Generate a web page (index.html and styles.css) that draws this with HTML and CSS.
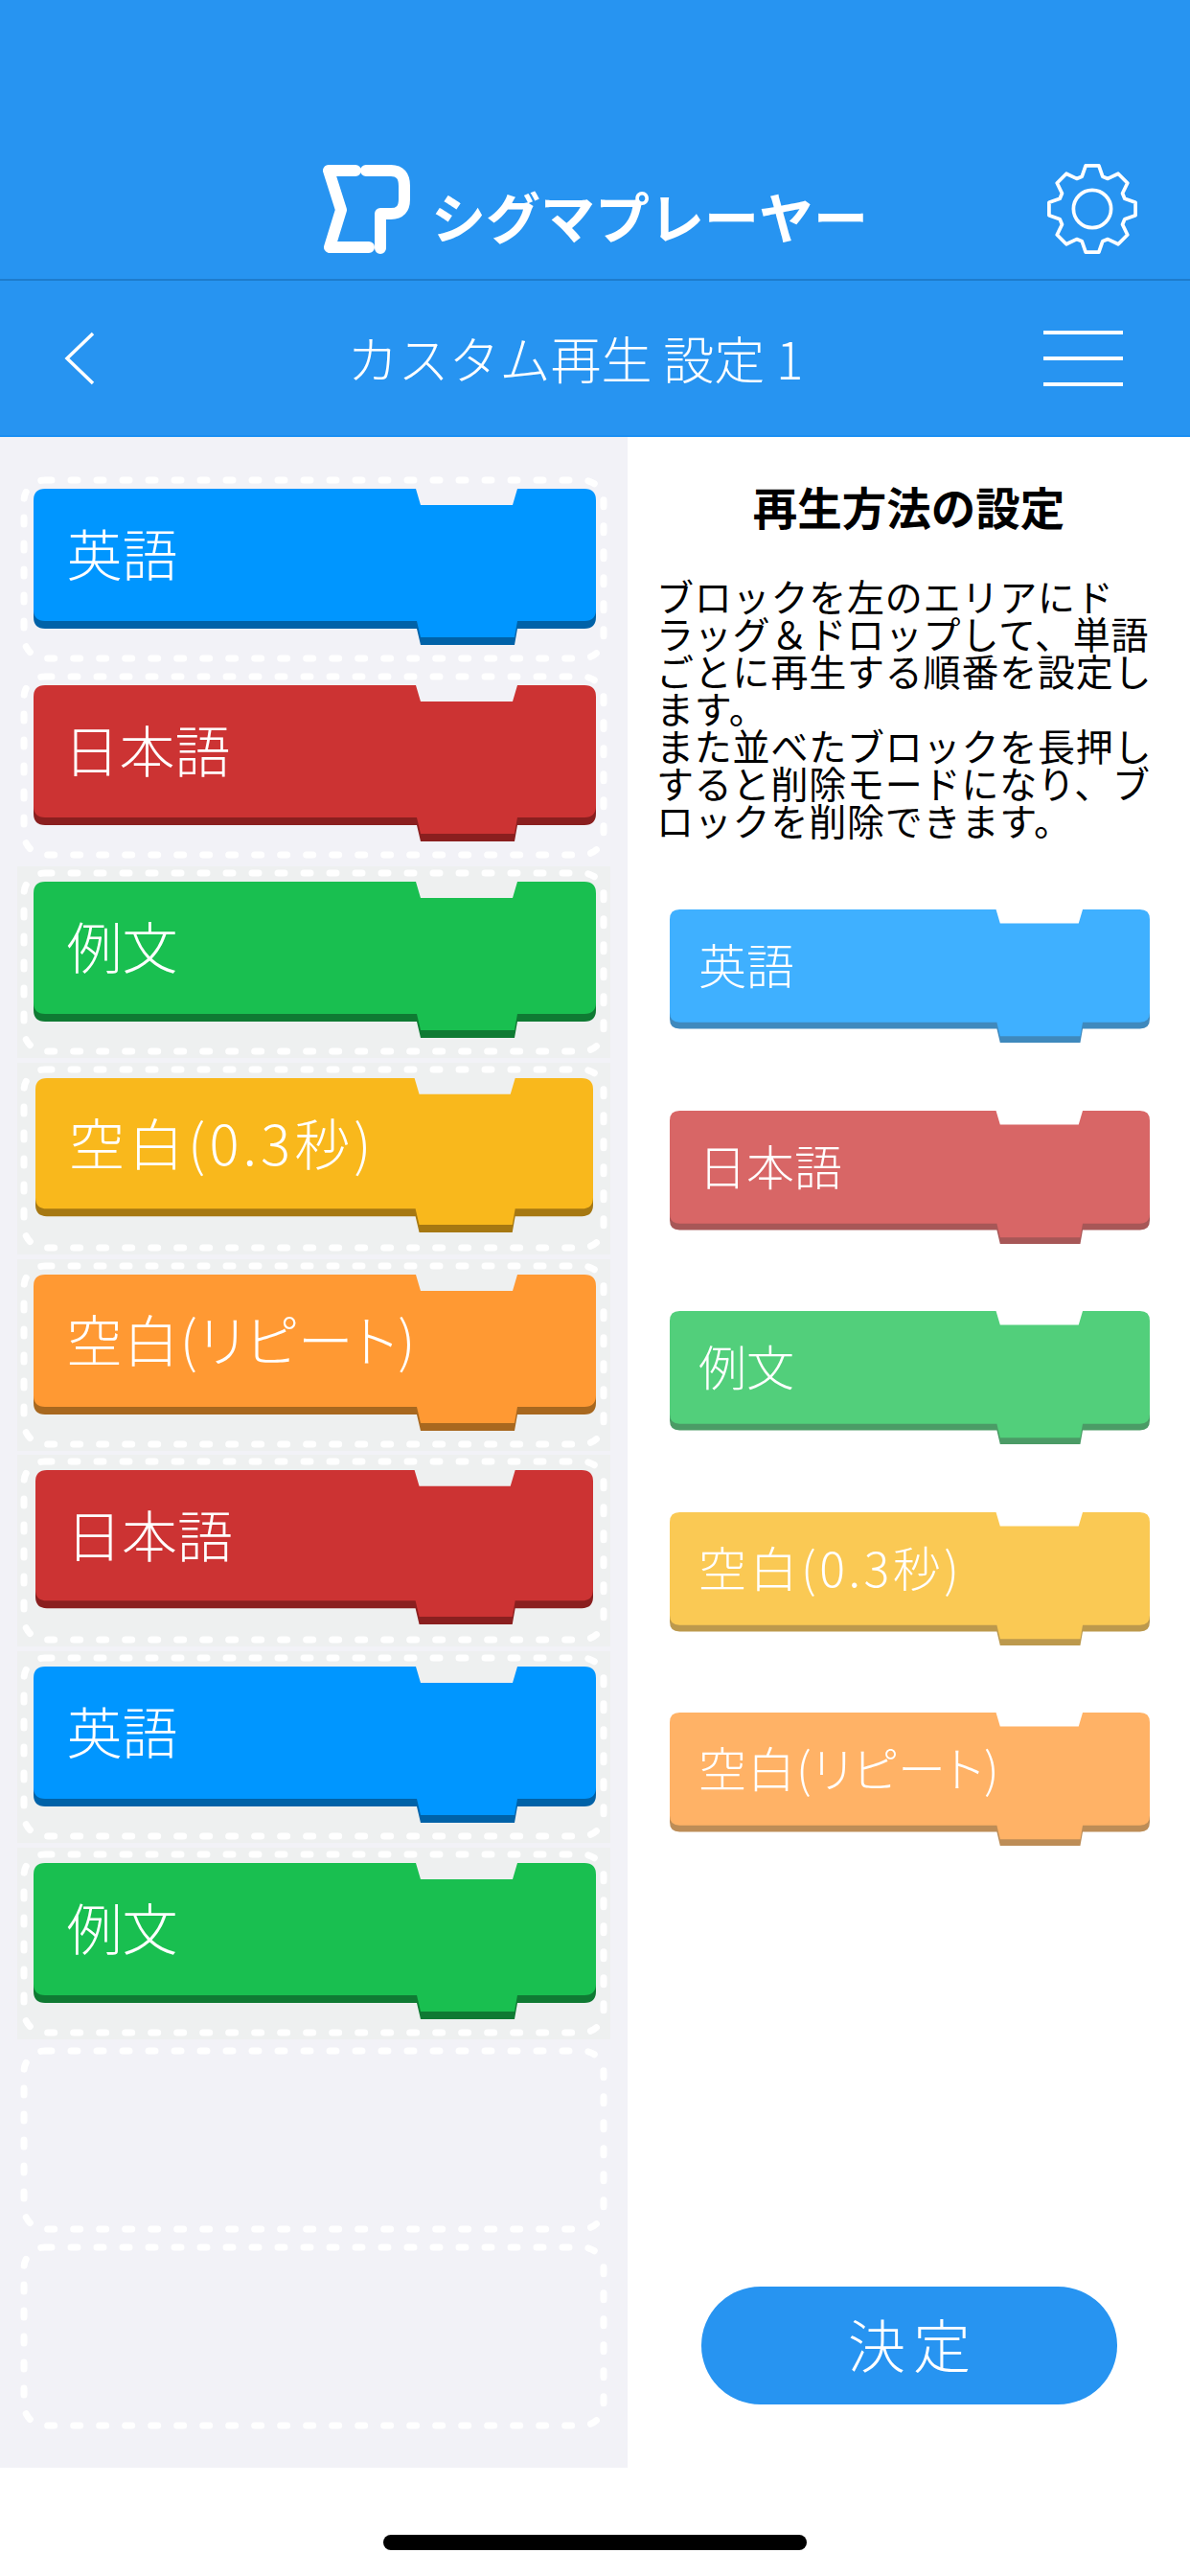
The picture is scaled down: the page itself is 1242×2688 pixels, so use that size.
FILE: index.html
```html
<!DOCTYPE html>
<html lang="ja">
<head>
    <meta charset="UTF-8">
    <meta name="viewport" content="width=device-width, initial-scale=1.0">
    <title>カスタム再生 設定1</title>
    <link rel="stylesheet" href="styles.css">
</head>
<body>
    <!-- shared shapes -->
    <svg class="defs" width="0" height="0">
        <defs>
            <g id="block-shape">
                <path class="block-dark" d="M0 100V134Q0 146 12 146H400L404 163H502L505 146H575Q587 146 587 134V100Z"/>
                <path class="block-face" d="M12 0H399L404 17H500L505 0H575Q587 0 587 12V126Q587 138 575 138H505L502 155H404L400 138H12Q0 138 0 126V12Q0 0 12 0Z"/>
            </g>
            <rect id="slot-outline" x="0" y="0" width="605" height="186" rx="22"/>
        </defs>
    </svg>

    <div class="page">
        <header class="topbar">
            <div></div>
            <div class="brand">
                <svg class="brand-mark" viewBox="0 0 92 96">
                    <path d="M7 7H35M7 7L20 48L8 87H49M46 7H72Q86 7 86 23V37Q86 52 72 52H61V88"/>
                </svg>
                <span class="brand-name">シグマプレーヤー</span>
            </div>
            <svg class="gear" viewBox="0 0 100 100">
                <path d="M39 15.5L43 4H57L61 15.5L66.6 17.8L77.6 12.5L87.5 22.4L82.2 33.4L84.5 39L96 43V57L84.5 61L82.2 66.6L87.5 77.6L77.6 87.5L66.6 82.2L61 84.5L57 96H43L39 84.5L33.4 82.2L22.4 87.5L12.5 77.6L17.8 66.6L15.5 61L4 57V43L15.5 39L17.8 33.4L12.5 22.4L22.4 12.5L33.4 17.8Z"/>
                <circle cx="50" cy="50" r="20"/>
            </svg>
        </header>

        <nav class="subbar">
            <svg class="back" viewBox="0 0 32 56">
                <path d="M30 2L3 28L30 54"/>
            </svg>
            <h1 class="subbar-title">カスタム再生 設定 1</h1>
            <div class="menu"><span></span><span></span><span></span></div>
        </nav>

        <main class="main">
            <section class="slots">
                <div class="slot">
                    <svg class="slot-dash"><use href="#slot-outline"/></svg>
                    <div class="block blue"><svg viewBox="0 0 587 163" preserveAspectRatio="none"><use href="#block-shape"/></svg><span class="block-label">英語</span></div>
                </div>
                <div class="slot">
                    <svg class="slot-dash"><use href="#slot-outline"/></svg>
                    <div class="block red"><svg viewBox="0 0 587 163" preserveAspectRatio="none"><use href="#block-shape"/></svg><span class="block-label label-jp">日本語</span></div>
                </div>
                <div class="slot placed">
                    <svg class="slot-dash"><use href="#slot-outline"/></svg>
                    <div class="block green"><svg viewBox="0 0 587 163" preserveAspectRatio="none"><use href="#block-shape"/></svg><span class="block-label">例文</span></div>
                </div>
                <div class="slot placed">
                    <svg class="slot-dash"><use href="#slot-outline"/></svg>
                    <div class="block yellow narrow"><svg viewBox="0 0 587 163" preserveAspectRatio="none"><use href="#block-shape"/></svg><span class="block-label label-time">空白(0.3秒)</span></div>
                </div>
                <div class="slot placed">
                    <svg class="slot-dash"><use href="#slot-outline"/></svg>
                    <div class="block orange"><svg viewBox="0 0 587 163" preserveAspectRatio="none"><use href="#block-shape"/></svg><span class="block-label label-repeat">空白(リピート)</span></div>
                </div>
                <div class="slot placed">
                    <svg class="slot-dash"><use href="#slot-outline"/></svg>
                    <div class="block red narrow"><svg viewBox="0 0 587 163" preserveAspectRatio="none"><use href="#block-shape"/></svg><span class="block-label label-jp">日本語</span></div>
                </div>
                <div class="slot placed">
                    <svg class="slot-dash"><use href="#slot-outline"/></svg>
                    <div class="block blue"><svg viewBox="0 0 587 163" preserveAspectRatio="none"><use href="#block-shape"/></svg><span class="block-label">英語</span></div>
                </div>
                <div class="slot placed">
                    <svg class="slot-dash"><use href="#slot-outline"/></svg>
                    <div class="block green"><svg viewBox="0 0 587 163" preserveAspectRatio="none"><use href="#block-shape"/></svg><span class="block-label">例文</span></div>
                </div>
                <div class="slot">
                    <svg class="slot-dash"><use href="#slot-outline"/></svg>
                </div>
                <div class="slot">
                    <svg class="slot-dash"><use href="#slot-outline"/></svg>
                </div>
            </section>

            <aside class="side">
                <h2 class="side-title">再生方法の設定</h2>
                <p class="side-text">ブロックを左のエリアにドラッグ＆ドロップして、単語ごとに再生する順番を設定します。
また並べたブロックを長押しすると削除モードになり、ブロックを削除できます。</p>
                <div class="palette">
                    <div class="block small blue"><svg viewBox="0 0 587 163" preserveAspectRatio="none"><use href="#block-shape"/></svg><span class="block-label">英語</span></div>
                    <div class="block small red"><svg viewBox="0 0 587 163" preserveAspectRatio="none"><use href="#block-shape"/></svg><span class="block-label">日本語</span></div>
                    <div class="block small green"><svg viewBox="0 0 587 163" preserveAspectRatio="none"><use href="#block-shape"/></svg><span class="block-label">例文</span></div>
                    <div class="block small yellow"><svg viewBox="0 0 587 163" preserveAspectRatio="none"><use href="#block-shape"/></svg><span class="block-label label-time">空白(0.3秒)</span></div>
                    <div class="block small orange"><svg viewBox="0 0 587 163" preserveAspectRatio="none"><use href="#block-shape"/></svg><span class="block-label label-repeat">空白(リピート)</span></div>
                </div>
                <button class="confirm">決定</button>
            </aside>
        </main>

        <div class="home-area"><div class="home-bar"></div></div>
    </div>
</body>
</html>
```

FILE: styles.css
```css
* {
    box-sizing: border-box;
}
body {
    margin: 0;
    background-color: #fff;
    color: #000;
    font-family: "Noto Sans CJK JP", "Noto Sans", sans-serif;
}
.defs {
    display: block;
    height: 0;
}
.page {
    display: flex;
    flex-direction: column;
    width: 1242px;
    height: 2688px;
    overflow: hidden;
}

/* header */
.topbar {
    display: grid;
    grid-template-columns: 1fr auto 1fr;
    align-items: end;
    height: 293px;
    padding: 0 53px 24px;
    background-color: #2794f1;
    border-bottom: 2px solid #1e7ccd;
}
.brand {
    display: flex;
    align-items: center;
    gap: 22px;
    color: #fff;
}
.brand-mark {
    width: 92px;
    height: 96px;
    fill: none;
    stroke: #fff;
    stroke-width: 12;
    stroke-linecap: round;
    stroke-linejoin: round;
}
.brand-name {
    padding-top: 10px;
    font-size: 57px;
    font-weight: 700;
    line-height: 1;
}
.gear {
    justify-self: end;
    width: 98px;
    height: 98px;
    fill: none;
    stroke: #fff;
    stroke-width: 3.8;
    stroke-linejoin: round;
}
.subbar {
    display: grid;
    grid-template-columns: 1fr auto 1fr;
    align-items: center;
    height: 163px;
    padding: 0 70px 0 67px;
    background-color: #2794f1;
    border-bottom: 2px solid #1b8ff2;
}
.back {
    width: 32px;
    height: 56px;
    fill: none;
    stroke: #fff;
    stroke-width: 3.5;
}
.subbar-title {
    margin: 0 38px 0 0;
    color: #fff;
    font-size: 53px;
    font-weight: 300;
    line-height: 1;
}
.menu {
    display: flex;
    flex-direction: column;
    gap: 23px;
    justify-self: end;
    width: 83px;
}
.menu span {
    height: 4px;
    background-color: #fff;
}

/* main */
.main {
    display: flex;
    flex: 1;
}
.slots {
    display: flex;
    flex-direction: column;
    gap: 18.9px;
    width: 655px;
    padding: 45px 25px 0;
    background-color: #f2f2f7;
}
.slot {
    position: relative;
    flex: none;
    width: 605px;
    height: 186px;
    padding: 9px 0 0 9.5px;
}
.slot.placed {
    background-color: #eef0f0;
    box-shadow: 0 0 0 7px #eef0f0;
}
.slot-dash {
    position: absolute;
    top: 0;
    left: 0;
    width: 605px;
    height: 186px;
    overflow: visible;
    fill: none;
    stroke: #fff;
    stroke-width: 7;
    stroke-linecap: round;
    stroke-dasharray: 7 20;
}

/* blocks */
.block {
    position: relative;
    width: 587px;
    height: 163px;
}
.block svg {
    position: absolute;
    top: 0;
    left: 0;
    width: 100%;
    height: 100%;
}
.block-face {
    fill: var(--face);
}
.block-dark {
    fill: var(--dark);
}
.block-label {
    position: relative;
    display: flex;
    align-items: center;
    height: 132px;
    padding-left: 35px;
    color: #fff;
    font-size: 58px;
    font-weight: 300;
    font-feature-settings: "palt";
    white-space: nowrap;
}
.label-jp {
    padding-left: 32px;
}
.label-time {
    letter-spacing: 0.07em;
}
.label-repeat {
    letter-spacing: 0.02em;
}
.block.narrow {
    width: 582px;
    height: 161px;
    margin-left: 2.5px;
}
.block.small {
    width: 501px;
    height: 139px;
    opacity: 0.75;
}
.block.small .block-label {
    height: 112px;
    padding-left: 30px;
    font-size: 50px;
}
.blue {
    --face: #0096ff;
    --dark: #0062a8;
}
.red {
    --face: #cc3333;
    --dark: #8a1f1f;
}
.green {
    --face: #19bf50;
    --dark: #0f7a33;
}
.yellow {
    --face: #f9b81c;
    --dark: #a67812;
}
.orange {
    --face: #ff9933;
    --dark: #a8681f;
}

/* right column */
.side {
    display: flex;
    flex: 1;
    flex-direction: column;
    padding-top: 49px;
}
.side-title {
    margin: 0 0 51px;
    font-size: 46.5px;
    font-weight: 700;
    line-height: 46px;
    text-align: center;
}
.side-text {
    width: 522px;
    margin: 0 0 0 30px;
    font-size: 39px;
    line-height: 39px;
    letter-spacing: 0.8px;
    line-break: strict;
    white-space: pre-line;
}
.palette {
    display: flex;
    flex-direction: column;
    gap: 70.5px;
    margin: 74px 0 0 44px;
}
.confirm {
    width: 434px;
    height: 123px;
    margin: auto 0 66px 77px;
    padding: 0 0 6px 8px;
    background-color: #2794f1;
    color: #fff;
    border: none;
    border-radius: 62px;
    font-family: inherit;
    font-size: 60px;
    font-weight: 300;
    letter-spacing: 8px;
}
.home-area {
    display: flex;
    justify-content: center;
    height: 113px;
    padding-top: 70px;
}
.home-bar {
    width: 442px;
    height: 16px;
    background-color: #000;
    border-radius: 8px;
}
```
